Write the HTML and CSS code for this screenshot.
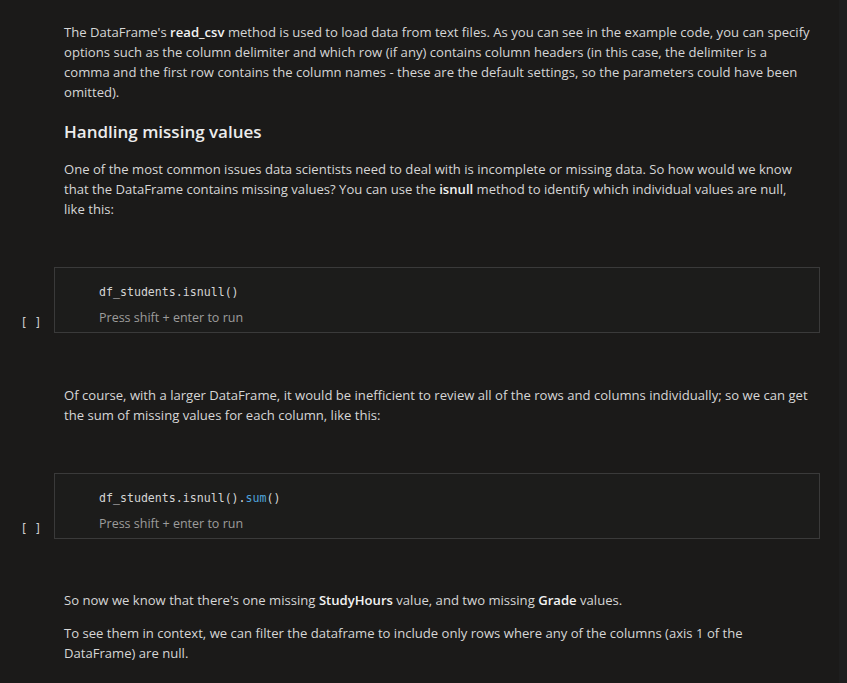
FILE: index.html
```html
<!DOCTYPE html>
<html>
<head>
<meta charset="utf-8">
<link rel="stylesheet" href="styles.css">
</head>
<body>
<div class="page">
  <div class="notebook">
    <div class="md md-first">
      <p>The DataFrame's <b>read_csv</b> method is used to load data from text files. As you can see in the example code, you can specify<br>options such as the column delimiter and which row (if any) contains column headers (in this case, the delimiter is a<br>comma and the first row contains the column names - these are the default settings, so the parameters could have been<br>omitted).</p>
      <h2>Handling missing values</h2>
      <p>One of the most common issues data scientists need to deal with is incomplete or missing data. So how would we know<br>that the DataFrame contains missing values? You can use the <b>isnull</b> method to identify which individual values are null,<br>like this:</p>
    </div>
    <div class="code-row">
      <div class="prompt">[ ]</div>
      <div class="code-box">
        <div class="code">df_students.isnull()</div>
        <div class="hint">Press shift + enter to run</div>
      </div>
    </div>
    <div class="md md-mid">
      <p>Of course, with a larger DataFrame, it would be inefficient to review all of the rows and columns individually; so we can get<br>the sum of missing values for each column, like this:</p>
    </div>
    <div class="code-row">
      <div class="prompt">[ ]</div>
      <div class="code-box">
        <div class="code">df_students.isnull().<span class="fn">sum</span>()</div>
        <div class="hint">Press shift + enter to run</div>
      </div>
    </div>
    <div class="md md-last">
      <p>So now we know that there's one missing <b>StudyHours</b> value, and two missing <b>Grade</b> values.</p>
      <p>To see them in context, we can filter the dataframe to include only rows where any of the columns (axis 1 of the<br>DataFrame) are null.</p>
    </div>
  </div>
  <div class="scrollbar"></div>
</div>
</body>
</html>
```
FILE: styles.css
```css
html, body {
  margin: 0;
  padding: 0;
  background: #1b1a19;
  height: 100%;
  overflow: hidden;
}
.page {
  display: flex;
  height: 683px;
}
.notebook {
  flex: 1;
  padding: 0 19px 0 0;
  font-family: "Open Sans", "Noto Sans", sans-serif;
  font-size: 13.1px;
  color: #d6d6d6;
}
.scrollbar {
  width: 8px;
  background: #1e1e1e;
}
.md {
  padding: 0 0 0 64px;
}
.md p {
  margin: 0 0 10px 0;
  line-height: 20px;
  white-space: nowrap;
}
.md b {
  color: #f2f2f2;
  font-weight: 600;
}
.md-first {
  padding-top: 22px;
}
h2 {
  margin: 18px 0 15px 0;
  font-size: 17px;
  font-weight: 600;
  line-height: 24px;
  color: #ececec;
}
.code-row {
  display: flex;
  margin: 48px 0 0 0;
}
.prompt {
  width: 54px;
  flex: none;
  display: flex;
  align-items: flex-end;
  justify-content: center;
  padding: 0 0 4px 8px;
  box-sizing: border-box;
  font-family: "DejaVu Sans Mono", monospace;
  font-size: 11.6px;
  color: #d0d0d0;
}
.code-box {
  flex: 1;
  border: 1px solid #3a3a3a;
  background: #1c1c1b;
  padding: 16px 0 6px 44px;
}
.code {
  font-family: "DejaVu Sans Mono", monospace;
  font-size: 11.6px;
  line-height: 16px;
  color: #d4d4d4;
}
.fn {
  color: #4fa3db;
}
.hint {
  margin-top: 10px;
  font-size: 12.5px;
  line-height: 16px;
  color: #9c9c9c;
}
.md-mid {
  margin-top: 52px;
}
.md-last {
  margin-top: 51px;
}
.md-last p {
  margin-bottom: 13px;
}
```
